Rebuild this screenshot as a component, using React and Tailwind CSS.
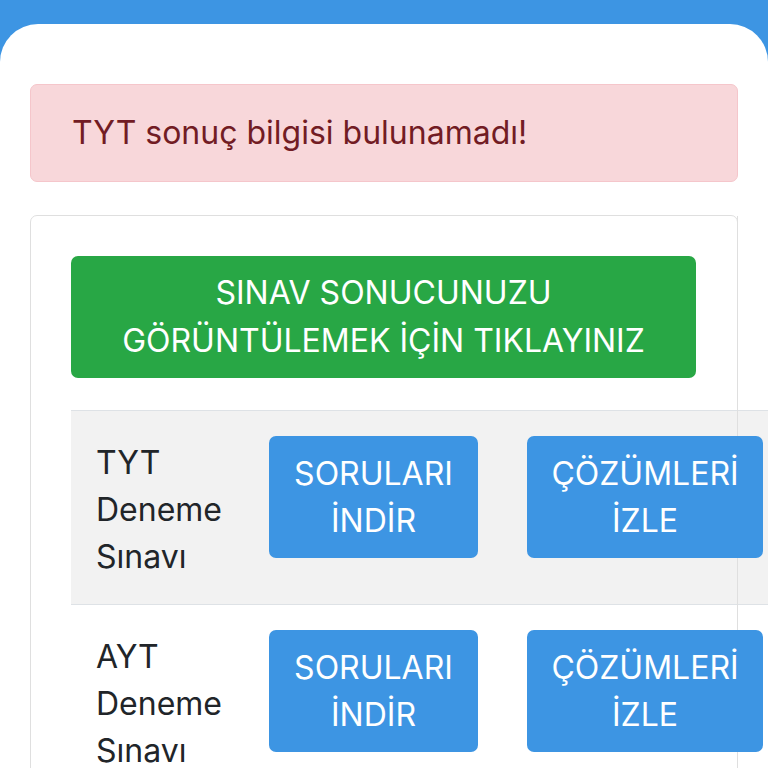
import React from "react";

const font = { fontFamily: "Inter, 'Noto Sans', sans-serif" };

function Row({ label1, striped }) {
  return (
    <div
      className={`flex items-start w-[716px] border-t border-[#dee2e6] ${
        striped ? "bg-[#f2f2f2]" : "bg-white"
      }`}
    >
      <div className="w-[198px] shrink-0 pl-[25px] pr-[24px] pt-[28px] pb-[24px] text-[32px] leading-[47px] text-[#212529]">
        {label1}
        <br />
        Deneme
        <br />
        Sınavı
      </div>
      <div className="w-[258px] shrink-0 pt-[25px] pr-[49px]">
        <div className="relative z-20 w-[209px] h-[122px] rounded-[7px] bg-[#3d95e3] text-white text-[32px] leading-[47px] flex flex-col items-center justify-center">
          <span>SORULARI</span>
          <span>İNDİR</span>
        </div>
      </div>
      <div className="w-[260px] shrink-0 pt-[25px] pr-[24px]">
        <div className="relative z-20 w-[236px] h-[122px] rounded-[7px] bg-[#3d95e3] text-white text-[32px] leading-[47px] flex flex-col items-center justify-center">
          <span>ÇÖZÜMLERİ</span>
          <span>İZLE</span>
        </div>
      </div>
    </div>
  );
}

export default function App() {
  return (
    <div style={font} className="w-[768px] h-[768px] overflow-hidden bg-[#3d95e3] pt-[24px]">
      <div className="bg-white rounded-t-[38px] h-[744px] px-[30px] pt-[60px]">
        <div className="bg-[#f8d7da] border border-[#f5c6cb] rounded-[7px] h-[98px] px-[41px] flex items-center text-[#721c24] text-[32px]">
          TYT sonuç bilgisi bulunamadı!
        </div>
        <div className="relative mt-[33px] border border-[#dfdfdf] rounded-[7px] p-[40px] pb-0 h-[600px]">
          <div className="w-[625px] h-[122px] rounded-[7px] bg-[#28a745] text-white text-[32px] leading-[48px] flex flex-col items-center justify-center">
            <span>SINAV SONUCUNUZU</span>
            <span>GÖRÜNTÜLEMEK İÇİN TIKLAYINIZ</span>
          </div>
          <div className="mt-[32px]">
            <Row label1="TYT" striped />
            <Row label1="AYT" />
          </div>
          <div className="absolute z-10 top-0 bottom-0 right-[-1px] w-px bg-[#dfdfdf]" />
        </div>
      </div>
    </div>
  );
}
